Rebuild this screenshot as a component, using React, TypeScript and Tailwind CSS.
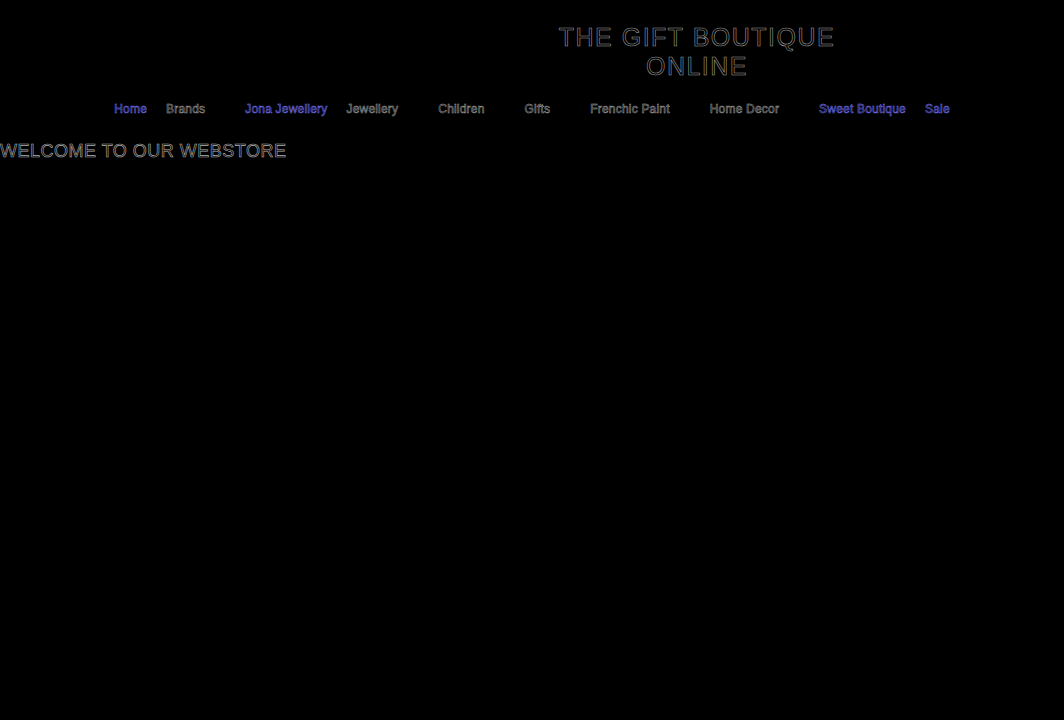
import React from 'react';

type NavItem = { label: string; active?: boolean; dropdown?: boolean };

const navItems: NavItem[] = [
  { label: 'Home', active: true },
  { label: 'Brands', dropdown: true },
  { label: 'Jona Jewellery', active: true },
  { label: 'Jewellery', dropdown: true },
  { label: 'Children', dropdown: true },
  { label: 'Gifts', dropdown: true },
  { label: 'Frenchic Paint', dropdown: true },
  { label: 'Home Decor', dropdown: true },
  { label: 'Sweet Boutique', active: true },
  { label: 'Sale', active: true },
];

export default function App() {
  return (
    <div className="min-h-[720px] w-full bg-black font-['Liberation_Sans',Arial,sans-serif]">
      <header className="pl-[330px] pt-[23px] text-center">
        <h1 className="text-[25px] font-normal uppercase leading-[29px] tracking-[1.5px] text-transparent [-webkit-text-stroke:0.6px_#9a9a9a]">
          The Gift Boutique
          <br />
          Online
        </h1>
      </header>

      <nav className="mt-[20px] flex justify-center gap-[19px] text-[12px] leading-4 tracking-[0.2px]">
        {navItems.map((item) => (
          <a
            key={item.label}
            href="#"
            className={
              item.active
                ? 'text-transparent [-webkit-text-stroke:0.5px_#7a7aff]'
                : 'pr-[21px] text-transparent [-webkit-text-stroke:0.5px_#a0a0a0]'
            }
          >
            {item.label}
          </a>
        ))}
      </nav>

      <main className="mt-[22px]">
        <h2 className="text-[18px] font-normal uppercase leading-6 tracking-[0.5px] text-transparent [-webkit-text-stroke:0.6px_#b0b0b0]">
          Welcome to our webstore
        </h2>
      </main>
    </div>
  );
}
